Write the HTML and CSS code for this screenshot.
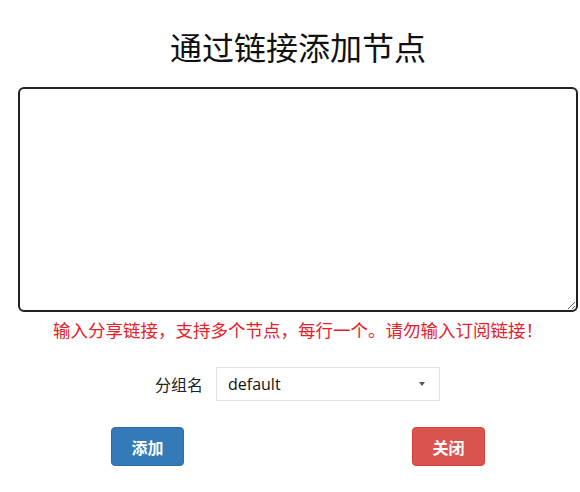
FILE: index.html
```html
<!DOCTYPE html>
<html lang="zh-CN">
<head>
<meta charset="utf-8">
<title>通过链接添加节点</title>
<link rel="stylesheet" href="styles.css">
</head>
<body>
<div class="dialog">
  <h2 class="title">通过链接添加节点</h2>
  <textarea class="links"></textarea>
  <p class="hint">输入分享链接，支持多个节点，每行一个。请勿输入订阅链接！</p>
  <div class="group-row">
    <label class="group-label">分组名</label>
    <div class="select">
      <span class="select-value">default</span>
      <span class="select-arrow"></span>
    </div>
  </div>
  <div class="actions">
    <button class="btn btn-primary">添加</button>
    <button class="btn btn-danger">关闭</button>
  </div>
</div>
</body>
</html>
```

FILE: styles.css
```css
html, body {
  margin: 0;
  padding: 0;
  background: #fff;
}
body {
  font-family: "Noto Sans CJK SC", "Noto Sans", sans-serif;
  color: #222;
}
.dialog {
  width: 580px;
  display: flex;
  flex-direction: column;
  padding-top: 24px;
}
.title {
  margin: 0 0 0 18px;
  width: 560px;
  text-align: center;
  font-size: 32px;
  font-weight: normal;
  line-height: 44px;
  color: #111;
}
.links {
  margin: 19px 0 0 18px;
  width: 560px;
  height: 225px;
  box-sizing: border-box;
  border: 2px solid #222;
  border-radius: 6px;
  resize: vertical;
  outline: none;
}
.hint {
  margin: 5px 0 0 16px;
  text-align: center;
  font-size: 17.5px;
  line-height: 26px;
  color: #e8202a;
}
.group-row {
  display: flex;
  align-items: center;
  margin-top: 24px;
  padding-left: 155px;
}
.group-label {
  font-size: 16px;
  width: 61px;
  color: #222;
}
.select {
  width: 224px;
  height: 34px;
  box-sizing: border-box;
  border: 1px solid #e2e2e2;
  display: flex;
  align-items: center;
  justify-content: space-between;
  padding: 0 14px 0 11px;
}
.select-value {
  font-family: "Open Sans", "Noto Sans", sans-serif;
  font-size: 16px;
  color: #111;
}
.select-arrow {
  width: 0;
  height: 0;
  border-left: 3px solid transparent;
  border-right: 3px solid transparent;
  border-top: 4px solid #555;
}
.actions {
  display: flex;
  justify-content: space-between;
  margin-top: 26px;
  padding: 0 95px 0 111px;
}
.btn {
  width: 73px;
  height: 39px;
  border: 1px solid transparent;
  border-radius: 4px;
  color: #fff;
  font-family: "Noto Sans CJK SC", sans-serif;
  font-size: 16px;
  font-weight: bold;
  padding: 0;
}
.btn-primary {
  background: #337ab7;
  border-color: #2e6da4;
}
.btn-danger {
  background: #d9534f;
  border-color: #d43f3a;
}
```
